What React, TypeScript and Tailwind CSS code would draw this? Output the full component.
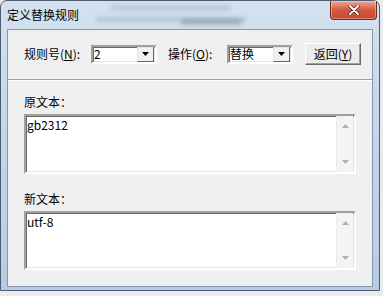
import React from "react";

const font = { fontFamily: '"Noto Sans CJK SC", "Liberation Sans", sans-serif' };

function Arrow({ dir, color = "#000" }: { dir: "down" | "up"; color?: string }) {
  return (
    <svg width="7" height="4" viewBox="0 0 7 4" className="block">
      {dir === "down" ? (
        <polygon points="0,0 7,0 3.5,4" fill={color} />
      ) : (
        <polygon points="0,4 7,4 3.5,0" fill={color} />
      )}
    </svg>
  );
}

function Combo({ value }: { value: string }) {
  return (
    <div className="w-[66px] h-[19px] flex border-2 border-t-[#a0a0a0] border-l-[#a0a0a0] border-b-white border-r-white shadow-[inset_1px_1px_0_#696969,inset_-1px_-1px_0_#e3e3e3] bg-white">
      <div className="flex-1 flex items-center pl-[1px] text-[12px] leading-[14px] text-black">{value}</div>
      <div className="w-[17px] h-full flex items-center justify-center bg-[#f0f0f0] border border-t-[#e3e3e3] border-l-[#e3e3e3] border-b-[#696969] border-r-[#696969] mr-[1px] mb-[1px]">
        <Arrow dir="down" />
      </div>
    </div>
  );
}

function TextBox({ value, h }: { value: string; h: string }) {
  return (
    <div className={`ml-[16px] w-[332px] ${h} flex border-2 border-t-[#a0a0a0] border-l-[#a0a0a0] border-b-white border-r-white shadow-[inset_1px_1px_0_#696969,inset_-1px_-1px_0_#e3e3e3] bg-white`}>
      <div className="flex-1 pl-[1px] pt-[1px] text-[12px] leading-[16px] text-black">{value}</div>
      <div className="w-[17px] h-full bg-[#f4f4f4] border-l border-[#ececec] flex flex-col items-center justify-between pt-[8px] pb-[8px] mr-[1px]">
        <Arrow dir="up" color="#b0b0b0" />
        <Arrow dir="down" color="#b0b0b0" />
      </div>
    </div>
  );
}

export default function App() {
  return (
    <div className="w-[383px] h-[296px] bg-[#e9ecef] overflow-hidden" style={font}>
      <div className="w-[380px] h-[291px] rounded-t-[7px] border border-[#4d5d70] bg-gradient-to-b from-[#d4e1ef] via-[#c3d5e9] to-[#b7cce4] flex flex-col">
        <div className="h-[28px] flex items-start relative overflow-hidden">
          <div className="absolute left-[110px] top-[4px] w-[120px] h-[6px] bg-[#9aa8b8] opacity-40 blur-[2px]" />
          <div className="absolute left-[95px] top-[16px] w-[150px] h-[5px] bg-[#8e9cad] opacity-40 blur-[2px]" />
          <div className="absolute left-[180px] top-[18px] w-[60px] h-[6px] bg-[#4a5563] opacity-30 blur-[2px]" />
          <div className="pl-[6px] pt-[6px] text-[12px] leading-[16px] text-black relative">定义替换规则</div>
          <div className="flex-1" />
          <div className="relative mr-[2px] w-[47px] h-[19px] rounded-b-[4px] border border-t-0 border-[#6b2a22] bg-gradient-to-b from-[#e9a99b] via-[#d4573f] to-[#c94a30] flex items-center justify-center shadow-[inset_0_0_0_1px_rgba(255,255,255,0.35)]">
            <svg width="12" height="10" viewBox="0 0 12 10">
              <path d="M2 1 L10 9 M10 1 L2 9" stroke="#3a1a14" strokeWidth="3.2" strokeLinecap="round" />
              <path d="M2 1 L10 9 M10 1 L2 9" stroke="#ffffff" strokeWidth="2" strokeLinecap="round" />
            </svg>
          </div>
        </div>
        <div className="mx-[6px] h-[258px] border border-[#8497ae] bg-[#f0f0f0] flex flex-col text-black">
          <div className="mt-[13px] h-[22px] flex items-center text-[12px] leading-[14px]">
            <div className="pl-[16px] w-[83px]">
              规则号(<span className="underline">N</span>):
            </div>
            <Combo value="2" />
            <div className="ml-[11px] w-[59px]">
              操作(<span className="underline">O</span>):
            </div>
            <Combo value="替换" />
            <div className="ml-[12px] w-[56px] h-[22px] flex items-center justify-center bg-[#ececec] border border-t-white border-l-white border-b-[#696969] border-r-[#696969] shadow-[inset_-1px_-1px_0_#a0a0a0]">
              返回(<span className="underline">Y</span>)
            </div>
          </div>
          <div className="mt-[14px] h-[2px] border-t border-b border-t-[#a0a0a0] border-b-white" />
          <div className="mt-[14px] pl-[16px] text-[12px] leading-[14px]">原文本：</div>
          <div className="mt-[5px]">
            <TextBox value="gb2312" h="h-[60px]" />
          </div>
          <div className="mt-[18px] pl-[16px] text-[12px] leading-[14px]">新文本：</div>
          <div className="mt-[5px]">
            <TextBox value="utf-8" h="h-[59px]" />
          </div>
        </div>
      </div>
    </div>
  );
}
